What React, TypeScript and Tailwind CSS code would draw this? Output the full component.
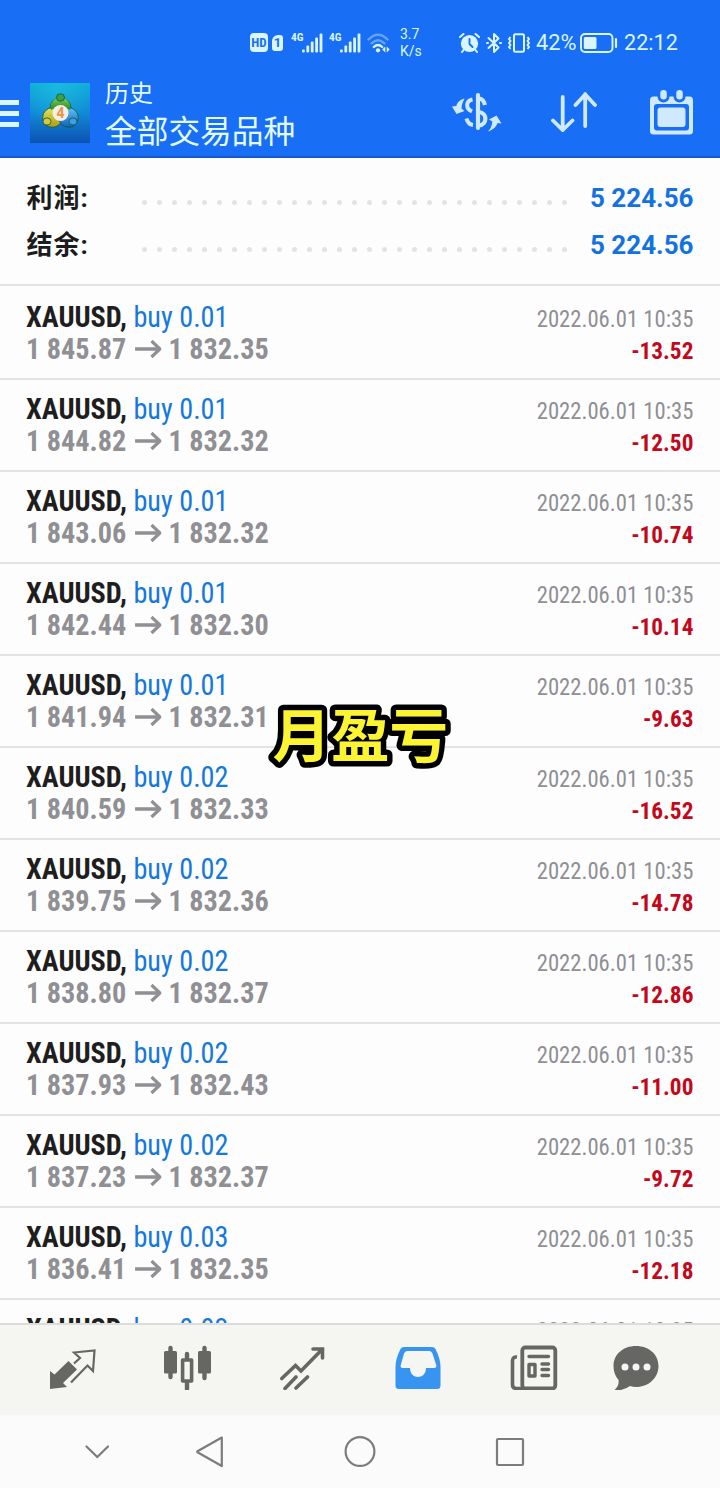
import type { ReactNode } from "react";

type Deal = { volume: string; open: string; close: string; profit: string };

const TIME = "2022.06.01 10:35";

const DEALS: Deal[] = [
  { volume: "0.01", open: "1 845.87", close: "1 832.35", profit: "-13.52" },
  { volume: "0.01", open: "1 844.82", close: "1 832.32", profit: "-12.50" },
  { volume: "0.01", open: "1 843.06", close: "1 832.32", profit: "-10.74" },
  { volume: "0.01", open: "1 842.44", close: "1 832.30", profit: "-10.14" },
  { volume: "0.01", open: "1 841.94", close: "1 832.31", profit: "-9.63" },
  { volume: "0.02", open: "1 840.59", close: "1 832.33", profit: "-16.52" },
  { volume: "0.02", open: "1 839.75", close: "1 832.36", profit: "-14.78" },
  { volume: "0.02", open: "1 838.80", close: "1 832.37", profit: "-12.86" },
  { volume: "0.02", open: "1 837.93", close: "1 832.43", profit: "-11.00" },
  { volume: "0.02", open: "1 837.23", close: "1 832.37", profit: "-9.72" },
  { volume: "0.03", open: "1 836.41", close: "1 832.35", profit: "-12.18" },
  { volume: "0.03", open: "1 835.90", close: "1 832.35", profit: "-10.65" },
];

function Signal() {
  return (
    <div className="flex h-5 w-8 shrink-0">
      <span className="-mt-0.5 w-[11px] font-['Roboto_Condensed',sans-serif] text-[11.5px] leading-[13px] font-bold">4G</span>
      <svg className="h-5 w-[21px]" viewBox="0 0 21 20" fill="currentColor">
        <rect x="0" y="16.5" width="2.8" height="3" rx="1" />
        <rect x="4.4" y="12.5" width="2.8" height="7" rx="1" />
        <rect x="8.8" y="8.5" width="2.8" height="11" rx="1" />
        <rect x="13.2" y="4.5" width="2.8" height="15" rx="1" />
        <rect x="17.6" y="0.5" width="2.8" height="19" rx="1" />
      </svg>
    </div>
  );
}

function StatusBar() {
  return (
    <div className="flex h-[72px] items-center pt-[13px] pl-[250px] text-[#d9f6ff]">
      <span className="flex h-[19px] w-[18px] items-center justify-center rounded-[4px] bg-[#d9f6ff] font-['Roboto_Condensed',sans-serif] text-[13px] font-bold text-[#186ef5]">
        HD
      </span>
      <span className="mr-2 ml-1 flex h-4 w-[11px] items-center justify-center rounded-[3px] rounded-tl-[6px] bg-[#d9f6ff] text-[13px] font-bold text-[#186ef5]">
        1
      </span>
      <Signal />
      <span className="w-1.5" />
      <Signal />
      <svg className="ml-[6px] h-5 w-6 shrink-0" viewBox="0 0 24 20" fill="none" stroke="currentColor" strokeLinecap="round">
        <path d="M1.5 6.5Q11 -3 20.5 6.5" strokeWidth="2.4" opacity=".4" />
        <path d="M4.5 10.3Q11 4 17.5 10.3" strokeWidth="2.4" opacity=".4" />
        <path d="M6.8 14Q11 10 15.2 14" strokeWidth="2.4" />
        <circle cx="11" cy="17.3" r="2.1" fill="currentColor" stroke="none" />
        <path d="M18.3 13.5v6l-3-3zM19.7 13.5v6l3-3z" fill="currentColor" stroke="none" />
      </svg>
      <span className="ml-[9px] w-[30px] text-[14px] leading-[17px]">
        3.7
        <br />
        K/s
      </span>
      <svg className="ml-[29px] h-5 w-[21px] shrink-0" viewBox="0 0 21 20" fill="none" stroke="currentColor" strokeLinecap="round">
        <circle cx="10.5" cy="10.5" r="8.6" fill="currentColor" stroke="none" />
        <path d="M1 4L4.5 1M20 4L16.5 1M4.5 17L3 19M16.5 17L18 19" strokeWidth="2" />
        <path d="M10.5 6v5l3 3" stroke="#186ef5" strokeWidth="1.9" />
      </svg>
      <svg className="ml-[6px] h-[22px] w-4 shrink-0" viewBox="0 0 16 22" fill="none" stroke="currentColor" strokeWidth="2" strokeLinejoin="round" strokeLinecap="round">
        <path d="M2.5 6L12.5 15.5L8 20V2L12.5 6.5L2.5 16M1 11h1M14 11h1" />
      </svg>
      <svg className="ml-[5px] h-5 w-6 shrink-0" viewBox="0 0 24 20" fill="none" stroke="currentColor" strokeWidth="2" strokeLinejoin="round">
        <rect x="7" y="1.3" width="10" height="17.4" rx="1.5" />
        <path d="M3.5 4l-1.5 2l1.5 2l-1.5 2l1.5 2l-1.5 2l1.5 2M20.5 4l1.5 2l-1.5 2l1.5 2l-1.5 2l1.5 2l-1.5 2" />
      </svg>
      <span className="ml-[5px] w-[44px] shrink-0 text-[21.8px] leading-6">42%</span>
      <svg className="h-5 w-[38px] shrink-0" viewBox="0 0 38 20" fill="none" stroke="currentColor" strokeWidth="1.9">
        <rect x="1" y="1" width="31.5" height="18" rx="4" />
        <rect x="3.8" y="4" width="12.7" height="12" rx="1.5" fill="currentColor" stroke="none" />
        <path d="M36 6v8" strokeWidth="2.2" strokeLinecap="round" />
      </svg>
      <span className="ml-[6px] text-[21.6px] leading-6">22:12</span>
    </div>
  );
}

function AppLogo() {
  return (
    <svg className="h-[60px] w-[60px] shrink-0" viewBox="0 0 60 60">
      <defs>
        <linearGradient id="sky" x1="0" y1="0" x2="0" y2="1">
          <stop offset="0" stopColor="#10acd8" />
          <stop offset=".5" stopColor="#1289d4" />
          <stop offset="1" stopColor="#0c51b4" />
        </linearGradient>
        <radialGradient id="glow" cx=".45" cy=".1" r=".6">
          <stop offset="0" stopColor="#1fc4e4" stopOpacity=".6" />
          <stop offset="1" stopColor="#1fc4e4" stopOpacity="0" />
        </radialGradient>
        <linearGradient id="green" x1="0" y1="0" x2="0" y2="1">
          <stop offset="0" stopColor="#7fcf5a" />
          <stop offset="1" stopColor="#23882b" />
        </linearGradient>
        <linearGradient id="yellow" x1="0" y1="0" x2="0" y2="1">
          <stop offset="0" stopColor="#e2e45e" />
          <stop offset="1" stopColor="#a99c12" />
        </linearGradient>
        <linearGradient id="blue" x1="0" y1="0" x2="0" y2="1">
          <stop offset="0" stopColor="#61c3f4" />
          <stop offset="1" stopColor="#0c62b8" />
        </linearGradient>
      </defs>
      <rect width="60" height="60" fill="url(#sky)" />
      <rect width="60" height="60" fill="url(#glow)" />
      <g stroke="#14543c" strokeWidth=".8">
        <circle cx="30.5" cy="25" r="10.5" fill="url(#green)" />
        <circle cx="22.5" cy="34.5" r="9.8" fill="url(#yellow)" />
        <circle cx="38.5" cy="34.5" r="9.8" fill="url(#blue)" />
        <path d="M21 27C20 20 24 14.5 30.5 14.5S41 20 40 27L34 24H27Z" fill="url(#green)" stroke="none" />
        <ellipse cx="30.5" cy="14.5" rx="4" ry="3.8" fill="#3aa043" />
        <ellipse cx="17" cy="38.5" rx="4" ry="3.6" fill="#d6ca3c" />
        <ellipse cx="43" cy="38.5" rx="4" ry="3.6" fill="#3a9fe4" />
      </g>
      <circle cx="30.5" cy="30" r="8" fill="#f4f0e8" />
      <text x="30.5" y="35" textAnchor="middle" fontFamily="Roboto, sans-serif" fontSize="14" fontWeight="700" fill="#f09040">
        4
      </text>
    </svg>
  );
}

function Toolbar() {
  return (
    <div className="flex h-[84px] items-start pt-[10.5px] text-[#cfe9ff]">
      <div className="mt-[17px] flex w-[18.5px] flex-col gap-[6px]">
        <span className="h-[5px] bg-[#d9f6ff]" />
        <span className="h-[5px] bg-[#d9f6ff]" />
        <span className="h-[5px] bg-[#d9f6ff]" />
      </div>
      <div className="ml-[11.5px]">
        <AppLogo />
      </div>
      <div className="-mt-0.5 ml-[15px] w-[347px] text-[#e2fbff]">
        <div className="text-[24px] leading-[26px]">历史</div>
        <div className="mt-[6px] text-[31.7px] leading-[40px]">全部交易品种</div>
      </div>
      <svg className="mt-[9px] h-10 w-[50px] shrink-0" viewBox="0 0 50 40" fill="none" stroke="currentColor" strokeLinecap="round">
        <path d="M26 3V36" strokeWidth="4.2" />
        <path d="M20.5 7.5C13.5 9 13.5 16.5 20 19.5M14.5 26.5C15.5 30.5 17.5 32.5 21 33" strokeWidth="4" strokeLinecap="butt" />
        <path d="M27 6.5C30.5 7 32 8.5 33 13M27 20C35.5 21 35.5 32.5 27 33.5" strokeWidth="4.2" strokeLinecap="butt" />
        <path d="M12.5 6.5C8 7.5 5 11 4.3 14L0 14.5L4.5 22L12.5 19L9.5 16.5C9.5 12 11.5 9 12.5 6.5Z" fill="currentColor" stroke="none" />
        <path d="M36 39.5C42 37.5 44.5 34 45.5 31L49.5 31.5L44.5 23.5L37 27.5L40.3 29.5C40 34 38.5 37 36 39.5Z" fill="currentColor" stroke="none" />
      </svg>
      <svg className="mt-[9px] ml-[49px] h-10 w-[46px] shrink-0" viewBox="0 0 46 40" fill="none" stroke="currentColor" strokeWidth="3.8" strokeLinecap="round">
        <path d="M11.7 5V38M2 28.5L11.7 38L21.5 28.5M34.2 34V2M24.5 13L34.2 2.5L44 13" />
      </svg>
      <svg className="mt-[7px] ml-[53px] h-[45px] w-[43px] shrink-0" viewBox="0 0 43 45" fill="currentColor">
        <path
          fillRule="evenodd"
          d="M3.5 6.5H7.5A6 6 0 0 0 19.5 6.5H23.5A6 6 0 0 0 35.5 6.5H39.5Q43 6.5 43 10V41Q43 44.5 39.5 44.5H3.5Q0 44.5 0 41V10Q0 6.5 3.5 6.5ZM7 14Q4 14 4 17V37.5Q4 40.5 7 40.5H36Q39 40.5 39 37.5V17Q39 14 36 14Z"
        />
        <rect x="7.5" y="17.5" width="28" height="19.5" rx="3" />
        <rect x="10.3" y="0" width="6.5" height="9.5" rx="3.2" />
        <rect x="26.3" y="0" width="6.5" height="9.5" rx="3.2" />
      </svg>
    </div>
  );
}

function TotalRow({ label, value }: { label: string; value: string }) {
  return (
    <div className="flex h-[47px] items-center px-[26.5px]">
      <span className="w-[115px] pt-0.5 text-[26px] font-bold tracking-[1px] text-[#1c1c1c]">{label}</span>
      <span className="flex w-[425px] justify-between pt-[9px]">
        {Array.from({ length: 29 }, (_, i) => (
          <i key={i} className="h-[5px] w-[5px] rounded-full bg-[#e3e3e3]" />
        ))}
      </span>
      <span className="ml-auto pt-px text-[26px] font-bold text-[#1472de]">{value}</span>
    </div>
  );
}

function DealRow({ deal }: { deal: Deal }) {
  return (
    <div className="flex h-[92px] shrink-0 justify-between border-b-2 border-[#e3e3e4] pt-[13px] pr-[26.5px] pl-[26px] font-['Roboto_Condensed',Roboto,sans-serif]">
      <div className="origin-left scale-x-[0.94] text-[30px] leading-8 whitespace-nowrap">
        <div>
          <b className="font-bold text-[#1e1e1e]">XAUUSD,</b> <span className="text-[#1478dc]">buy {deal.volume}</span>
        </div>
        <div className="flex items-center font-bold text-[#8f8f94]">
          {deal.open}
          <svg className="mr-[8px] ml-[9px] h-[18px] w-7" viewBox="0 0 28 18" fill="none" stroke="currentColor" strokeWidth="3.4">
            <path d="M0 9H26.5M17.5 1L26.5 9L17.5 17" />
          </svg>
          {deal.close}
        </div>
      </div>
      <div className="pt-0.5 text-right text-[24.5px] leading-8">
        <div className="origin-right scale-x-[0.925] text-[#8f8f94]">{TIME}</div>
        <div className="origin-right scale-x-[0.95] font-bold text-[#c4081c]">{deal.profit}</div>
      </div>
    </div>
  );
}

function TabIcon({ children, className }: { children: ReactNode; className?: string }) {
  return (
    <svg className={`h-12 w-12 shrink-0 ${className ?? ""}`} viewBox="0 0 48 48" fill="none" stroke="currentColor">
      {children}
    </svg>
  );
}

function TabBar() {
  return (
    <div className="flex h-[92px] shrink-0 items-start border-t-2 border-[#dcdcdb] bg-[#f5f5f2] pt-[17px] pl-[49px] text-[#666665]">
      <TabIcon>
        <path d="M1 47V29L5.5 32.5L19.5 19L28 27.5L14 41L18 45Z" fill="currentColor" stroke="none" />
        <path d="M25 21.5L31 16L25 10.5L45.5 8.5L44 29L38.5 23.5L22 40.5" strokeWidth="2.2" />
      </TabIcon>
      <TabIcon className="ml-[66px]">
        <path d="M7.5 6V35M24 12V47M41.5 6V36" strokeWidth="4.4" strokeLinecap="round" />
        <rect x="1" y="9" width="13" height="22.5" rx="1.5" fill="currentColor" stroke="none" />
        <rect x="35" y="9" width="13" height="22.5" rx="1.5" fill="currentColor" stroke="none" />
        <rect x="19.6" y="18" width="9" height="21" fill="#f5f5f2" strokeWidth="3.6" strokeLinejoin="round" />
      </TabIcon>
      <TabIcon className="ml-[69px]">
        <path d="M1.8 36.5L15.5 23.5L21 29L42 7.5M33 7H42.5V16M5 46.5L16 35M16 46L27.5 35" strokeWidth="3.6" strokeLinecap="round" />
      </TabIcon>
      <TabIcon className="ml-[67px] text-[#3794f0]">
        <path
          d="M9 5H37Q39.5 5 40.5 7Q45.5 17 45.5 25V43.5Q45.5 47 42 47H4Q.5 47 .5 43.5V25Q.5 17 5.5 7Q6.5 5 9 5ZM12 9Q10 9 9 11.5L5.5 24Q5.5 26 7.5 26H15C15 38 31 38 31 26H39Q41.5 26 41.5 24L37.5 11.5Q36.5 9 34.5 9Z"
          fill="currentColor"
          fillRule="evenodd"
          stroke="none"
        />
      </TabIcon>
      <TabIcon className="ml-[67px]">
        <rect x="12.3" y="5.5" width="33" height="41" rx="3" strokeWidth="3.8" />
        <path d="M7 15Q2.5 14.5 2.5 19V42.5Q2.5 46.5 6.5 46.5H14" strokeWidth="3.6" />
        <path d="M19 14.5H38.5M32 22H38.5M32 27.5H38.5M32 33.5H38.5" strokeWidth="3.4" strokeLinecap="round" />
        <rect x="19" y="22.5" width="6" height="11.5" strokeWidth="3.4" strokeLinejoin="round" />
      </TabIcon>
      <TabIcon className="ml-[54px]">
        <path d="M24 4C37 4 46.5 12.5 46.5 24S37 45 24 45Q21 45 18 44Q11 49 2 48.5Q7.5 43.5 6.5 38Q1.5 32 1.5 24C1.5 12.5 11 4 24 4Z" fill="currentColor" stroke="none" />
        <path d="M13 25h.01M24 25h.01M35 25h.01" stroke="#f5f5f2" strokeWidth="7" strokeLinecap="round" />
      </TabIcon>
    </div>
  );
}

function SystemNav() {
  return (
    <div className="flex h-[73px] shrink-0 items-center bg-[#fbfbfb] pl-[85px] text-[#7c7c7c]">
      <svg className="h-6 w-6" viewBox="0 0 24 24" fill="none" stroke="currentColor" strokeWidth="2.2" strokeLinecap="round">
        <path d="M1.5 6.5L12.3 17L23 6.5" />
      </svg>
      <svg className="ml-[86px] h-8 w-8" viewBox="0 0 32 32" fill="none" stroke="currentColor" strokeWidth="2.2" strokeLinejoin="round">
        <path d="M26.8 1.5L2.5 15.3Q2 15.8 2.5 16.3L26.8 30Z" />
      </svg>
      <svg className="ml-[117px] h-8 w-8" viewBox="0 0 32 32" fill="none" stroke="currentColor" strokeWidth="2.2">
        <circle cx="16" cy="15.5" r="14.4" />
      </svg>
      <svg className="ml-[118px] h-8 w-8" viewBox="0 0 32 32" fill="none" stroke="currentColor" strokeWidth="2.2">
        <rect x="3" y="3" width="26" height="26" rx="1" />
      </svg>
    </div>
  );
}

export default function App() {
  return (
    <div className="relative flex h-[1488px] w-[720px] flex-col overflow-hidden bg-[#fdfdfd] font-[Roboto,'Noto_Sans_CJK_SC',sans-serif]">
      <header className="h-[158px] shrink-0 border-b-2 border-[#1559cb] bg-[#186ef5]">
        <StatusBar />
        <Toolbar />
      </header>
      <section className="h-[127.5px] shrink-0 border-b-2 border-[#e3e3e4] pt-4">
        <TotalRow label="利润:" value="5 224.56" />
        <TotalRow label="结余:" value="5 224.56" />
      </section>
      <main className="min-h-0 flex-1 overflow-hidden pt-[2px]">
        {DEALS.map((deal) => (
          <DealRow key={deal.open} deal={deal} />
        ))}
      </main>
      <TabBar />
      <SystemNav />

      {/* caption laid over the list; svg text keeps the outline's corners round */}
      <svg className="absolute top-[693px] left-[260px] h-[88px] w-[200px]" viewBox="0 0 200 88">
        <text
          x="12.5"
          y="64"
          fontFamily="'Noto Sans CJK SC', sans-serif"
          fontSize="58.5"
          fontWeight="700"
          fill="#fbf433"
          stroke="#000"
          strokeWidth="11"
          strokeLinejoin="round"
          paintOrder="stroke"
        >
          月盈亏
        </text>
      </svg>
    </div>
  );
}
